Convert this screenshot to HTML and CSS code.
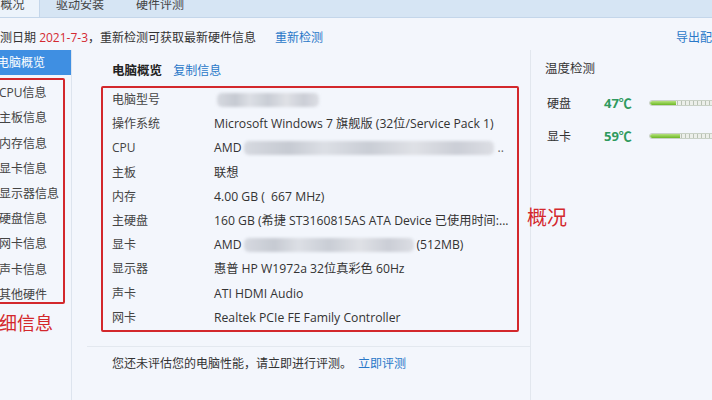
FILE: index.html
```html
<!DOCTYPE html>
<html>
<head>
<meta charset="utf-8">
<link rel="stylesheet" href="styles.css">
</head>
<body>
<div class="app">
  <div class="tabs">
    <div class="tab active">概况</div>
    <div class="tab">驱动安装</div>
    <div class="tab">硬件评测</div>
  </div>
  <div class="infobar">
    <span class="info-text">检测日期 <span class="date">2021-7-3</span>，重新检测可获取最新硬件信息</span>
    <a class="link recheck">重新检测</a>
    <a class="link export">导出配置</a>
  </div>
  <div class="body">
    <div class="sidebar">
      <div class="side-item selected">电脑概览</div>
      <div class="side-box">
        <div class="side-item">CPU信息</div>
        <div class="side-item">主板信息</div>
        <div class="side-item">内存信息</div>
        <div class="side-item">显卡信息</div>
        <div class="side-item">显示器信息</div>
        <div class="side-item">硬盘信息</div>
        <div class="side-item">网卡信息</div>
        <div class="side-item">声卡信息</div>
        <div class="side-item">其他硬件</div>
      </div>
      <div class="note note-left">详细信息</div>
    </div>
    <div class="main">
      <div class="main-head">
        <span class="title">电脑概览</span>
        <a class="link">复制信息</a>
      </div>
      <div class="spec-box">
        <div class="row"><span class="label">电脑型号</span><span class="value"><span class="blur b1"></span></span></div>
        <div class="row"><span class="label">操作系统</span><span class="value">Microsoft Windows 7 旗舰版 (32位/Service Pack 1)</span></div>
        <div class="row"><span class="label">CPU</span><span class="value">AMD <span class="blur b2"></span><span class="dots">..</span></span></div>
        <div class="row"><span class="label">主板</span><span class="value">联想</span></div>
        <div class="row"><span class="label">内存</span><span class="value">4.00 GB (&nbsp;&nbsp;667 MHz)</span></div>
        <div class="row"><span class="label">主硬盘</span><span class="value">160 GB (希捷 ST3160815AS ATA Device 已使用时间:...</span></div>
        <div class="row"><span class="label">显卡</span><span class="value">AMD <span class="blur b3"></span>(512MB)</span></div>
        <div class="row"><span class="label">显示器</span><span class="value">惠普 HP W1972a 32位真彩色 60Hz</span></div>
        <div class="row"><span class="label">声卡</span><span class="value">ATI HDMI Audio</span></div>
        <div class="row"><span class="label">网卡</span><span class="value">Realtek PCIe FE Family Controller</span></div>
      </div>
      <div class="note note-main">概况</div>
      <div class="footer"><span>您还未评估您的电脑性能，请立即进行评测。</span><a class="link">立即评测</a></div>
    </div>
    <div class="temps">
      <div class="temps-title">温度检测</div>
      <div class="temp-row">
        <span class="temp-label">硬盘</span>
        <span class="temp-val">47℃</span>
        <span class="thermo"><span class="fill" style="width:26px"></span></span>
      </div>
      <div class="temp-row">
        <span class="temp-label">显卡</span>
        <span class="temp-val">59℃</span>
        <span class="thermo"><span class="fill" style="width:30px"></span></span>
      </div>
    </div>
  </div>
</div>
</body>
</html>
```

FILE: styles.css
```css
* { box-sizing: border-box; }
html, body {
  margin: 0;
  padding: 0;
  width: 712px;
  height: 400px;
  overflow: hidden;
  background: #f3f6fc;
}
body {
  font-family: "Open Sans", "Noto Sans CJK SC", sans-serif;
  font-size: 12px;
  color: #333;
}
.app {
  width: 712px;
  height: 400px;
  position: relative;
  overflow: hidden;
}
.link {
  color: #2a78c8;
  cursor: pointer;
}

/* tabs */
.tabs {
  height: 18px;
  display: flex;
  background: #d6e5f4;
  border-bottom: 1px solid #c4d6ea;
}
.tab {
  height: 17px;
  line-height: 9px;
  padding: 0 16px;
  color: #444;
  width: 80px;
  text-align: center;
}
.tab.active {
  width: 40px;
  padding: 0;
  text-indent: -14px;
  background: #ecf3fb;
  border-right: 1px solid #c4d6ea;
}

/* info bar */
.infobar {
  height: 32px;
  display: flex;
  align-items: center;
  padding-top: 5px;
}
.info-text {
  margin-left: -12px;
  color: #333;
}
.date { color: #d42a32; }
.recheck { margin-left: 19px; }
.export { margin-left: auto; margin-right: -12px; }

/* body */
.body {
  display: flex;
  height: 350px;
}
.sidebar {
  width: 73px;
  border-right: 1px solid #dde4ee;
  position: relative;
}
.side-item {
  height: 25.2px;
  line-height: 25px;
  text-indent: -2px;
  color: #444;
  white-space: nowrap;
}
.side-item.selected {
  width: 71px;
  background: #3f8fe2;
  color: #fff;
  text-indent: -3px;
}
.side-box {
  margin-top: 3px;
  margin-left: -4px;
  padding-left: 4px;
  width: 69px;
  height: 226px;
  border: 2px solid #d3282c;
  border-radius: 2px;
}
.side-box .side-item { text-indent: -3px; }
.note {
  position: absolute;
  color: #d3282c;
  font-family: "Noto Sans CJK SC", sans-serif;
  white-space: nowrap;
}
.note-left {
  font-size: 18px;
  left: -19px;
  top: 259px;
}

/* main */
.main {
  width: 458px;
  position: relative;
  padding-left: 29px;
}
.main-head {
  height: 36px;
  padding-top: 10px;
}
.title {
  font-weight: bold;
  font-size: 12.5px;
  color: #222;
  margin-right: 8px;
  margin-left: 11px;
}
.spec-box {
  width: 418px;
  height: 246px;
  border: 2px solid #d3282c;
  border-radius: 2px;
  padding-left: 9px;
}
.row {
  display: flex;
  height: 24.2px;
  line-height: 24px;
  white-space: nowrap;
}
.label {
  width: 102px;
  color: #444;
}
.value {
  color: #333;
  display: flex;
  align-items: center;
  font-size: 12.2px;
}
.blur {
  display: inline-block;
  height: 14px;
  border-radius: 5px;
  background: linear-gradient(90deg, #d6d9e0 0%, #c6cad2 18%, #dcdfe5 32%, #c9cdd5 50%, #dfe1e6 68%, #cbced6 85%, #dcdee4 100%);
  filter: blur(1.6px);
}
.b1 { width: 102px; margin-left: 3px; }
.b2 { width: 250px; margin-left: 2px; }
.b3 { width: 170px; margin-left: 2px; margin-right: 3px; }
.dots { margin-left: 4px; color: #666; }
.note-main {
  font-size: 20px;
  left: 455px;
  top: 152px;
}
.footer {
  margin-top: 14px;
  margin-left: -14px;
  width: 443px;
  border-top: 1px solid #e3e8ef;
  padding-top: 8px;
  padding-left: 25px;
  line-height: 17px;
  white-space: nowrap;
}
.footer .link { margin-left: 6px; }

/* temps */
.temps {
  flex: 1;
  border-left: 1px solid #e2e7ee;
  padding-left: 14px;
  padding-top: 10px;
}
.temps-title {
  color: #333;
  font-size: 12.5px;
  height: 26px;
  line-height: 18px;
}
.temp-row {
  display: flex;
  align-items: center;
  height: 33px;
  white-space: nowrap;
}
.temp-label {
  width: 59px;
  padding-left: 2px;
  color: #333;
}
.temp-val {
  width: 45px;
  color: #2f9a5e;
  font-weight: bold;
  font-size: 13px;
}
.thermo {
  display: block;
  width: 80px;
  height: 6px;
  border-radius: 3px;
  background: repeating-linear-gradient(90deg, #ecefea 0 3px, #b9c2b5 3px 4px);
  border: 1px solid #c9d1c6;
  overflow: hidden;
}
.fill {
  display: block;
  height: 100%;
  background: linear-gradient(180deg, #b6e27d, #6cb825);
  border-radius: 3px 0 0 3px;
}
```
